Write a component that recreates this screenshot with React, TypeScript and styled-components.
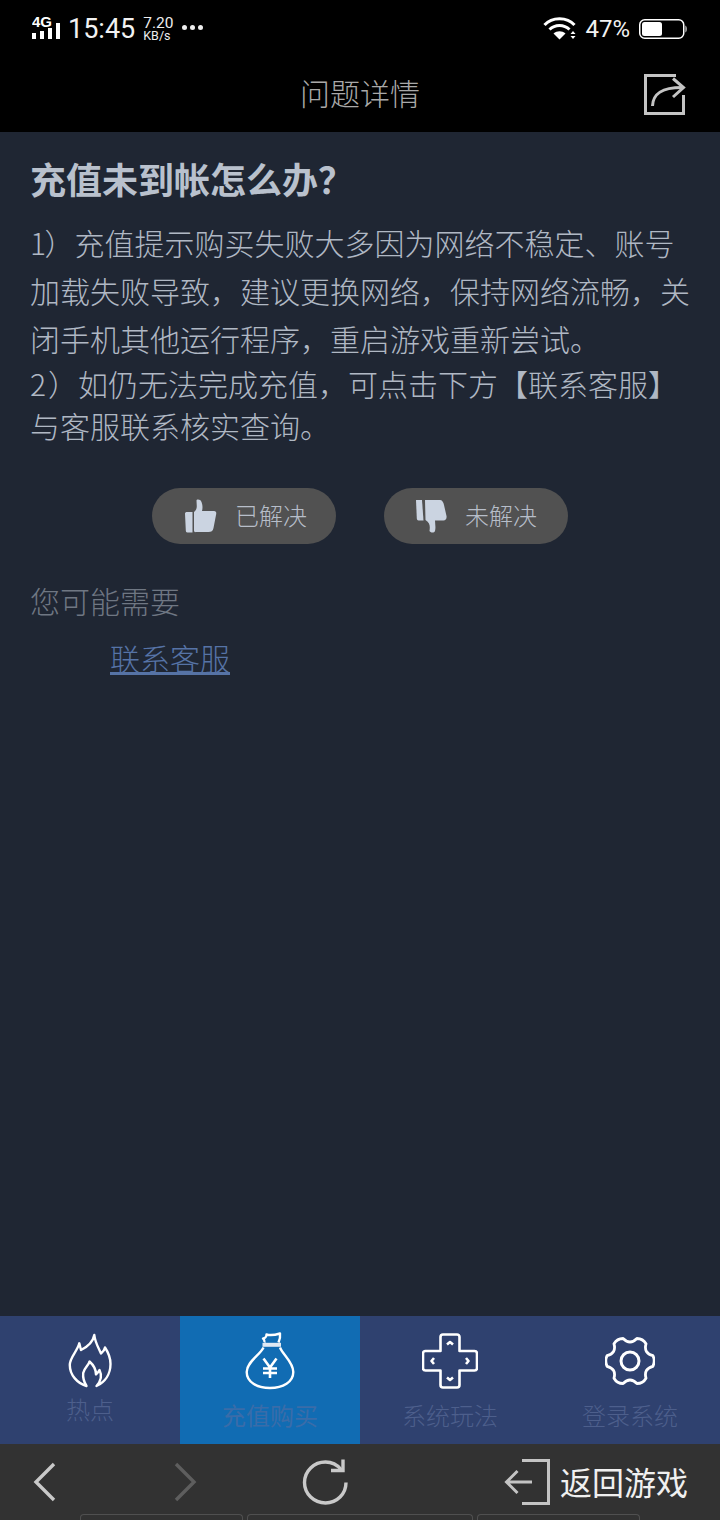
import React from 'react';
import styled, { createGlobalStyle } from 'styled-components';

const GlobalStyle = createGlobalStyle`
  html, body {
    margin: 0;
    padding: 0;
    background: #000;
  }
  * {
    box-sizing: border-box;
  }
`;

const FONT = `"Noto Sans CJK SC", "Noto Sans", sans-serif`;

const Page = styled.div`
  width: 720px;
  height: 1520px;
  display: flex;
  flex-direction: column;
  overflow: hidden;
  font-family: ${FONT};
`;

const StatusBar = styled.div`
  height: 56px;
  flex: none;
  background: #000;
  display: flex;
  align-items: center;
  justify-content: space-between;
  padding: 2px 32px 0 32px;
  color: #fff;
`;

const StatusGroup = styled.div`
  display: flex;
  align-items: center;
`;

const Clock = styled.span`
  font-family: Roboto, sans-serif;
  font-size: 27px;
  line-height: 32px;
  margin-left: 6px;
  color: #f2f2f2;
`;

const Speed = styled.div`
  display: flex;
  flex-direction: column;
  align-items: flex-start;
  margin-left: 8px;
  font-family: Roboto, sans-serif;
  font-size: 15.5px;
  line-height: 14px;
  color: #eee;
  small {
    font-size: 12.5px;
    line-height: 12px;
  }
`;

const Dots = styled.div`
  display: flex;
  gap: 3px;
  margin-left: 9px;
  margin-bottom: 4px;
`;

const Dot = styled.i`
  width: 5px;
  height: 5px;
  border-radius: 50%;
  background: #eee;
`;

const Percent = styled.span`
  font-family: Roboto, sans-serif;
  font-size: 24px;
  line-height: 30px;
  margin: 0 9px 0 8px;
  color: #f2f2f2;
`;

const Header = styled.div`
  height: 76px;
  flex: none;
  background: #000;
  display: flex;
  align-items: center;
  justify-content: center;
  padding-bottom: 4px;
  position: relative;
`;

const Title = styled.h1`
  margin: 0;
  font-size: 30px;
  font-weight: 300;
  color: #a9a9a9;
`;

const ShareButton = styled.div`
  position: absolute;
  right: 33px;
  top: 16px;
  width: 44px;
  height: 44px;
`;

const Content = styled.div`
  flex: 1;
  background: #1f2633;
  padding: 24px 30px 0;
`;

const Question = styled.h2`
  margin: 0;
  font-size: 36px;
  line-height: 44px;
  font-weight: 700;
  color: #b9c1cd;
`;

const Answer = styled.p`
  margin: 18px 0 0;
  font-size: 30px;
  font-weight: 300;
  color: #b0b8c4;
  line-height: 48px;
`;

const AnswerTail = styled.p`
  margin: 0;
  font-size: 30px;
  font-weight: 300;
  color: #b0b8c4;
  line-height: 42px;
`;

const Digit = styled.span<{ $spacing: number }>`
  letter-spacing: ${(p) => p.$spacing}px;
`;

const Feedback = styled.div`
  display: flex;
  justify-content: center;
  gap: 48px;
  margin-top: 42px;
`;

const FeedbackButton = styled.div<{ $shift?: number }>`
  width: 184px;
  height: 56px;
  border-radius: 28px;
  background: #515151;
  display: flex;
  align-items: center;
  justify-content: center;
  gap: 18px;
  padding-left: ${(p) => p.$shift ?? 0}px;
  font-size: 24px;
  font-weight: 300;
  color: #b7bec9;
`;

const FeedbackLabel = styled.span`
  margin-bottom: 4px;
`;

const Hint = styled.div`
  margin-top: 34px;
  font-size: 30px;
  font-weight: 300;
  line-height: 44px;
  color: #6f7783;
`;

const ServiceLink = styled.a`
  display: block;
  margin: 13px 0 0 80px;
  font-size: 30px;
  font-weight: 300;
  line-height: 44px;
  color: #5673a6;
  text-decoration: underline;
`;

const TabBar = styled.div`
  height: 128px;
  flex: none;
  display: grid;
  grid-template-columns: repeat(4, 180px);
  background: #2f416f;
`;

const Tab = styled.div<{ $active?: boolean; $labelGap: number }>`
  display: flex;
  flex-direction: column;
  align-items: center;
  padding-top: 16px;
  background: ${(p) => (p.$active ? '#116cb3' : 'transparent')};
  color: ${(p) => (p.$active ? '#3a6ca9' : '#4d5f8c')};
  font-size: 24px;
  font-weight: ${(p) => (p.$active ? 400 : 300)};
  line-height: 34px;
  span {
    margin-top: ${(p) => p.$labelGap}px;
  }
`;

const TabIcon = styled.div`
  height: 58px;
  display: flex;
  align-items: center;
  justify-content: center;
`;

const BottomBar = styled.div`
  height: 76px;
  flex: none;
  background: #323232;
  position: relative;
  display: flex;
  align-items: center;
  padding: 0 32px 0 33px;
`;

const NavSlot = styled.div<{ $width: number }>`
  width: ${(p) => p.$width}px;
  flex: none;
  display: flex;
  align-items: center;
`;

const BackToGame = styled.div`
  margin-left: auto;
  display: flex;
  align-items: center;
  gap: 10px;
  font-size: 32px;
  color: #f0f0f0;
`;

const BackLabel = styled.span`
  margin-bottom: 2px;
`;

const PeekRow = styled.div`
  position: absolute;
  left: 80px;
  bottom: 0;
  height: 6px;
  display: flex;
  gap: 4px;
`;

const Peek = styled.i<{ $width: number }>`
  display: block;
  width: ${(p) => p.$width}px;
  height: 6px;
  border: 1.5px solid #505050;
  border-bottom: 0;
  border-radius: 4px 4px 0 0;
`;

const SignalIcon = () => (
  <svg width="30" height="30" viewBox="0 -2 30 30">
    <text x="0" y="11" fontFamily="Liberation Sans, sans-serif" fontSize="15" fontWeight="700" fill="#fff">4G</text>
    <rect x="0" y="17" width="4" height="6" fill="#fff" />
    <rect x="8" y="15" width="4" height="8" fill="#fff" />
    <rect x="16" y="12" width="4" height="11" fill="#fff" />
    <rect x="24" y="7" width="4" height="16" fill="#fff" />
  </svg>
);

const WifiIcon = () => (
  <svg width="34" height="24" viewBox="0 0 34 24" fill="none" stroke="#fff" strokeWidth="3">
    <path d="M1.500 8C9 -0.500 24 -0.500 31.500 8" />
    <path d="M6.500 12.500C12 7 21 7 26.500 12.500" />
    <path d="M16.500 22.500L10.500 16.500C14 13.500 19 13.500 22.500 16.500Z" fill="#fff" stroke="none" />
    <path d="M27.500 17L30 14L32.500 17Z M27.500 19L32.500 19L30 22Z" fill="#fff" stroke="none" />
  </svg>
);

const BatteryIcon = () => (
  <svg width="49" height="22" viewBox="0 0 49 22">
    <rect x="0.750" y="1.750" width="44" height="18.500" rx="5" fill="none" stroke="#fff" strokeWidth="1.500" />
    <rect x="3" y="4" width="20" height="14" rx="2.500" fill="#fff" />
    <path d="M46.500 7.500C48 8 48 14 46.500 14.500Z" fill="#fff" />
  </svg>
);

const ShareIcon = () => (
  <svg width="44" height="44" viewBox="0 0 44 44" fill="none" stroke="#c4c4c4" strokeWidth="3">
    <path d="M33 3.500H2.500V41.500H40.500V23" />
    <path d="M9.500 34C10 22 18 15.500 39 15.500" />
    <path d="M30 6.500L40.500 15.500L30 25" />
  </svg>
);

const ThumbUpIcon = () => (
  <svg width="32" height="34" viewBox="0 0 32 34" fill="#cbd4e1">
    <path d="M0 14.500C0 13.500 1 13 2 13H7.500V33.500H2.500C1 33.500 1 32.500 0.800 31.500Z" />
    <path d="M9 13C13 10 11.500 6 11.500 1.500C11.500 0 15.500 0 16.500 3C18 7 17.500 10 17 12H29C31.500 12 31.500 14 31 16L28.500 29C28 32 26 33 23.500 33H11C9.500 33.500 9 32.500 9 31.500Z" />
  </svg>
);

const ThumbDownIcon = () => (
  <svg width="32" height="34" viewBox="0 0 32 34" fill="#cbd4e1">
    <path d="M1 1H7L8.500 21.500H3.500C2.500 21.500 2 20.500 1.800 19.500Z" />
    <path d="M10 1H25C27 1 28.500 3 29 6L31.500 17C32 20 30.500 21.500 28.500 21.500H20C20 25 21 28 20 32C19 34.500 15 33.500 14.500 32C15 28 15.500 24 10.500 21Z" />
  </svg>
);

const FlameIcon = () => (
  <svg width="44" height="58" viewBox="0 0 44 58" fill="none" stroke="#fff" strokeWidth="2.400" strokeLinejoin="round">
    <path d="M26.300 3C27 10 30 15 33 21.500C35 20 36.500 18 37 15.500C40 20 42.500 26 42.500 32C42.500 42 37 50 28.500 54C33 49 34 43 31.500 38C30.500 40 29.500 41 28 42.500C28 38 25.500 33 21.500 29.500C21 33 16 36 15.200 41C14.700 46 16 50 18.500 54C9 51 1.800 43 1.800 33C1.800 25 9 20 11.300 11.300C12 14 12.500 16 13 18C19 15 25 10 26.300 3Z" />
  </svg>
);

const MoneyBagIcon = () => (
  <svg width="50" height="58" viewBox="0 0 50 58" fill="none" stroke="#fff" strokeWidth="2.400" strokeLinejoin="round">
    <path d="M19.500 10.500C20 9 19 7.500 18 6.500C20 6.500 21.500 4.500 21.500 2.500C25 3.500 30 3 35 1.500C35.500 4.500 34.500 8 33.500 10.500" />
    <path d="M17.500 12.800H36" stroke="#e0e9f3" strokeWidth="4" />
    <path d="M18.500 15.500C15 23 1.700 30 1.700 40C1.700 50 12 56 25 56C38 56 48.300 50 48.300 40C48.300 30 38 23 35 15.500" />
    <path d="M18.500 26.500L25 35.500L31.500 26.500M25 35.500V46M18 36.500H32M18 41H32" strokeWidth="2.600" />
  </svg>
);

const DpadIcon = () => (
  <svg width="56" height="56" viewBox="0 0 56 56" fill="none" stroke="#fff" strokeWidth="2.600" strokeLinejoin="round">
    <path d="M21 1.500C19.500 1.500 18.500 2.500 18.500 4V18H3.500C2 18 1 19 1 20.500V35C1 36.500 2 37.500 3.500 37.500H18.500V52C18.500 53.500 19.500 54.500 21 54.500H35C36.500 54.500 37.500 53.500 37.500 52V37.500H52.500C54 37.500 55 36.500 55 35V20.500C55 19 54 18 52.500 18H37.500V4C37.500 2.500 36.500 1.500 35 1.500Z" />
    <path d="M25 11.500L28 9L31 11.500M12 25L9.500 28L12 31M44 25L46.500 28L44 31M25 44.500L28 47L31 44.500" />
  </svg>
);

const GearIcon = () => (
  <svg width="50" height="50" viewBox="0 0 50 50" fill="none" stroke="#fff" strokeWidth="2.800" strokeLinejoin="round">
    <path d="M31.900 2.500Q38 2.500 41 7.800Q38.400 17.250 47.900 19.700Q50.500 25 47.900 30.300Q38.400 32.750 41 42.200Q38 47.500 31.900 47.500Q25 40.500 18.100 47.500Q12 47.500 9 42.200Q11.600 32.750 2.100 30.300Q-0.500 25 2.100 19.700Q11.600 17.250 9 7.800Q12 2.500 18.100 2.500Q25 9.500 31.900 2.500Z" />
    <circle cx="25" cy="25" r="9" strokeWidth="3" />
  </svg>
);

const ChevronLeftIcon = () => (
  <svg width="24" height="40" viewBox="0 0 24 40" fill="none" stroke="#c9c9c9" strokeWidth="3.400">
    <path d="M21 2L3 20L21 38" />
  </svg>
);

const ChevronRightIcon = () => (
  <svg width="24" height="40" viewBox="0 0 24 40" fill="none" stroke="#5e5e5e" strokeWidth="3.400">
    <path d="M3 2L21 20L3 38" />
  </svg>
);

const ReloadIcon = () => (
  <svg width="46" height="46" viewBox="0 0 46 46" fill="none" stroke="#c9c9c9" strokeWidth="3.400">
    <path d="M39 10.500C35 5.500 29.500 3 23.500 3C12 3 2.500 12 2.500 23.500C2.500 35 12 44 23.500 44C35 44 44 35 44 23.500" />
    <path d="M41 0.500V11.500H29" />
  </svg>
);

const ExitIcon = () => (
  <svg width="46" height="46" viewBox="0 0 46 46" fill="none" stroke="#c4c4c4" strokeWidth="3">
    <path d="M18 1.500H44.500V44.500H18" />
    <path d="M28 23H2.500M13.500 12L2.500 23L13.500 34" />
  </svg>
);

function App() {
  return (
    <>
      <GlobalStyle />
      <Page>
        <StatusBar>
          <StatusGroup>
            <SignalIcon />
            <Clock>15:45</Clock>
            <Speed>
              7.20
              <small>KB/s</small>
            </Speed>
            <Dots>
              <Dot />
              <Dot />
              <Dot />
            </Dots>
          </StatusGroup>
          <StatusGroup>
            <WifiIcon />
            <Percent>47%</Percent>
            <BatteryIcon />
          </StatusGroup>
        </StatusBar>
        <Header>
          <Title>问题详情</Title>
          <ShareButton>
            <ShareIcon />
          </ShareButton>
        </Header>
        <Content>
          <Question>充值未到帐怎么办？</Question>
          <Answer>
            <Digit $spacing={-1.5}>1</Digit>）充值提示购买失败大多因为网络不稳定、账号
            <br />
            加载失败导致，建议更换网络，保持网络流畅，关
            <br />
            闭手机其他运行程序，重启游戏重新尝试。
          </Answer>
          <AnswerTail>
            <Digit $spacing={2}>2</Digit>）如仍无法完成充值，可点击下方【联系客服】
            <br />
            与客服联系核实查询。
          </AnswerTail>
          <Feedback>
            <FeedbackButton $shift={4}>
              <ThumbUpIcon />
              <FeedbackLabel>已解决</FeedbackLabel>
            </FeedbackButton>
            <FeedbackButton>
              <ThumbDownIcon />
              <FeedbackLabel>未解决</FeedbackLabel>
            </FeedbackButton>
          </Feedback>
          <Hint>您可能需要</Hint>
          <ServiceLink>联系客服</ServiceLink>
        </Content>
        <TabBar>
          <Tab $labelGap={2}>
            <TabIcon>
              <FlameIcon />
            </TabIcon>
            <span>热点</span>
          </Tab>
          <Tab $active $labelGap={8}>
            <TabIcon>
              <MoneyBagIcon />
            </TabIcon>
            <span>充值购买</span>
          </Tab>
          <Tab $labelGap={8}>
            <TabIcon>
              <DpadIcon />
            </TabIcon>
            <span>系统玩法</span>
          </Tab>
          <Tab $labelGap={8}>
            <TabIcon>
              <GearIcon />
            </TabIcon>
            <span>登录系统</span>
          </Tab>
        </TabBar>
        <BottomBar>
          <NavSlot $width={140}>
            <ChevronLeftIcon />
          </NavSlot>
          <NavSlot $width={129}>
            <ChevronRightIcon />
          </NavSlot>
          <ReloadIcon />
          <BackToGame>
            <ExitIcon />
            <BackLabel>返回游戏</BackLabel>
          </BackToGame>
          <PeekRow>
            <Peek $width={163} />
            <Peek $width={226} />
            <Peek $width={163} />
          </PeekRow>
        </BottomBar>
      </Page>
    </>
  );
}

export default App;
